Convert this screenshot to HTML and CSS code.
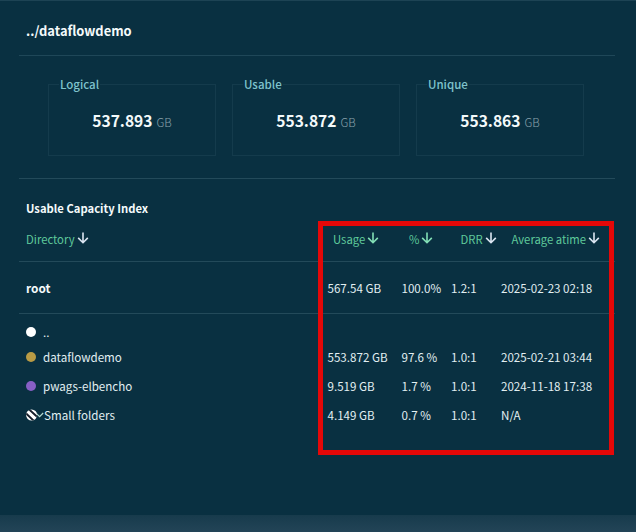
FILE: index.html
```html
<!DOCTYPE html>
<html lang="en">
<head>
<meta charset="utf-8">
<title>Capacity</title>
<link rel="stylesheet" href="styles.css">
</head>
<body>
<svg class="defs" aria-hidden="true">
  <symbol id="arrow" viewBox="0 0 12 12"><path d="M6 .5V10.6M1.2 5.9L6 10.7L10.8 5.9" fill="none" stroke="currentColor" stroke-width="1.6"/></symbol>
</svg>
<main class="panel">
  <header class="title">../dataflowdemo</header>
  <section class="cards">
    <fieldset class="card"><legend>Logical</legend><p><b>537.893</b><span>GB</span></p></fieldset>
    <fieldset class="card"><legend>Usable</legend><p><b>553.872</b><span>GB</span></p></fieldset>
    <fieldset class="card"><legend>Unique</legend><p><b>553.863</b><span>GB</span></p></fieldset>
  </section>
  <section class="index">
    <h2>Usable Capacity Index</h2>
    <div class="row head">
      <div>Directory<svg class="arrow"><use href="#arrow"/></svg></div>
      <div>Usage<svg class="arrow active"><use href="#arrow"/></svg></div>
      <div>%<svg class="arrow active"><use href="#arrow"/></svg></div>
      <div>DRR<svg class="arrow"><use href="#arrow"/></svg></div>
      <div>Average atime<svg class="arrow"><use href="#arrow"/></svg></div>
    </div>
    <div class="row root"><b>root</b><span>567.54 GB</span><span>100.0%</span><span>1.2:1</span><span>2025-02-23 02:18</span></div>
    <div class="list">
      <div class="row parent"><div class="name"><i class="dot"></i>..</div></div>
      <div class="row"><div class="name"><i class="dot gold"></i>dataflowdemo</div><span>553.872 GB</span><span>97.6 %</span><span>1.0:1</span><span>2025-02-21 03:44</span></div>
      <div class="row"><div class="name"><i class="dot purple"></i>pwags-elbencho</div><span>9.519 GB</span><span>1.7 %</span><span>1.0:1</span><span>2024-11-18 17:38</span></div>
      <div class="row"><div class="name small"><svg class="hatch" viewBox="0 0 18 12"><defs><clipPath id="disc"><circle cx="5.6" cy="6" r="5.5"/></clipPath></defs><g clip-path="url(#disc)"><path fill="#fff" d="M0 0h12v12H0z"/><path d="M1.6 -1L13 9.6M-1.4 3L9 13" stroke="#171d29" stroke-width="1.9"/></g><path d="M10.8 4.8L13.6 7.6L17.2 4" fill="none" stroke="#b5dbd2" stroke-width="1.2"/></svg>Small folders</div><span>4.149 GB</span><span>0.7 %</span><span>1.0:1</span><span>N/A</span></div>
    </div>
  </section>
</main>
<footer class="footer"></footer>
<div class="highlight"></div>
</body>
</html>
```

FILE: styles.css
```css
* { box-sizing: border-box; }
body {
  margin: 0;
  width: 636px;
  height: 532px;
  position: relative;
  overflow: hidden;
  display: flex;
  flex-direction: column;
  background: #093041;
  border-top: 1px solid #1d4354;
  color: #e2eff2;
  font-family: "Noto Sans CJK SC", sans-serif;
  font-size: 11.6px;
  line-height: 20px;
  white-space: nowrap;
}
.defs { display: none; }
.panel { flex: 1; padding: 0 21px 0 19px; }
.title {
  height: 55px;
  padding: 20px 7px 0;
  border-bottom: 1px solid #1f4758;
  color: #f4fafb;
  font-size: 12.9px;
  font-weight: 700;
}
.cards {
  height: 123px;
  display: flex;
  gap: 16px;
  padding: 18px 0 0 29px;
  border-bottom: 1px solid #234a5a;
}
.card {
  width: 168px;
  height: 82px;
  margin: 0;
  padding: 0 10px;
  border: 1px solid #143b4c;
}
.card legend {
  padding: 0 1px;
  color: #7fc4cd;
  font-size: 11.5px;
  font-weight: 500;
}
.card p {
  margin: 15px 0 0;
  display: flex;
  justify-content: center;
  align-items: baseline;
  gap: 4px;
  line-height: 22px;
}
.card b { color: #f4fafb; font-size: 15.6px; font-weight: 700; }
.card span { color: #8aa2ac; font-size: 11.6px; font-weight: 300; }
.index h2 {
  margin: 0;
  padding: 19px 7px 0;
  height: 42px;
  color: #f4fafb;
  font-size: 11.25px;
  font-weight: 700;
}
.row {
  display: grid;
  grid-template-columns: 301.5px 74px 49.5px 50px 1fr;
  align-items: center;
  height: 29px;
  padding-left: 7px;
}
.head {
  grid-template-columns: 307px 76px 51.5px 51px 1fr;
  height: 41px;
  padding-bottom: 5px;
  border-bottom: 1px solid #234a5a;
  color: #5fc99b;
  font-size: 11.3px;
}
.head > div { display: flex; align-items: center; gap: 2px; }
.arrow { width: 12px; height: 12px; color: #dce6f2; margin-top: -2px; }
.arrow.active { color: #83e0b6; }
.root { height: 52px; border-bottom: 1px solid #234a5a; }
.root b { color: #f4fafb; font-size: 11.8px; }
.list { padding-top: 6px; }
.parent { height: 23px; }
.parent + .row { margin-top: -1px; }
.name { display: flex; align-items: center; gap: 7px; }
.small { gap: 0; }
.dot { width: 10px; height: 10px; border-radius: 50%; background: #fff; }
.gold { background: #b99b45; }
.purple { background: #875fc5; }
.hatch { width: 18px; height: 12px; }
.footer { height: 17px; background: linear-gradient(#173b4c, #234457); }
.highlight {
  position: absolute;
  left: 318px;
  top: 220px;
  width: 296px;
  height: 234px;
  border: 5px solid #e40808;
}
```
